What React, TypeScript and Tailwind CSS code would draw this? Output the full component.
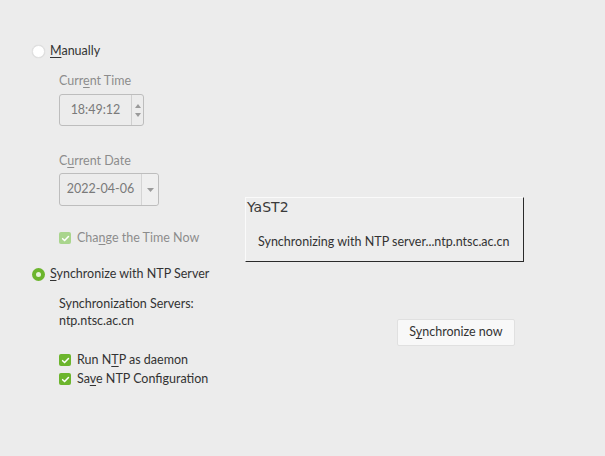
import React from "react";

function U({ children }: { children: React.ReactNode }) {
  return <span className="underline underline-offset-2 decoration-1">{children}</span>;
}

function Radio({ checked }: { checked?: boolean }) {
  if (checked) {
    return (
      <span className="w-[13px] h-[13px] rounded-full bg-[#6cb52d] flex items-center justify-center">
        <span className="w-[5px] h-[5px] rounded-full bg-[#e6f3d9]" />
      </span>
    );
  }
  return <span className="w-[13px] h-[13px] rounded-full bg-white border border-[#e2e2e2] shadow-[0_0_1px_rgba(0,0,0,0.15)]" />;
}

function Check({ disabled }: { disabled?: boolean }) {
  return (
    <span
      className={`w-[12px] h-[12px] rounded-[2px] flex items-center justify-center ${
        disabled ? "bg-[#a9d58d]" : "bg-[#6cb52d]"
      }`}
    >
      <svg width="9" height="9" viewBox="0 0 10 10">
        <path d="M1.8 5.2 L4 7.3 L8.3 2.8" fill="none" stroke="white" strokeWidth="1.7" strokeLinecap="round" strokeLinejoin="round" />
      </svg>
    </span>
  );
}

export default function App() {
  return (
    <div
      className="w-[605px] h-[456px] bg-[#ececec] relative overflow-hidden text-[12.5px] text-[#333]"
      style={{ fontFamily: "Lato, 'Noto Sans', sans-serif" }}
    >
      <div className="pl-[32px] pt-[43px] flex flex-col">
        <div className="flex items-center gap-[5px] h-[16px]">
          <Radio />
          <span>
            <U>M</U>anually
          </span>
        </div>

        <div className="pl-[27px] flex flex-col">
          <div className="mt-[14px] text-[#8c8c8c] leading-[16px]">
            Curr<U>e</U>nt Time
          </div>
          <div className="mt-[5px] w-[85px] h-[32px] border border-[#bdbdbd] rounded-[3px] flex text-[#7a7a7a]">
            <div className="flex-1 flex items-center justify-center">18:49:12</div>
            <div className="w-[12px] border-l border-[#cfcfcf] flex flex-col items-center justify-center gap-[5px]">
              <svg width="6" height="4" viewBox="0 0 6 4"><path d="M0 4 L3 0 L6 4Z" fill="#9a9a9a" /></svg>
              <svg width="6" height="4" viewBox="0 0 6 4"><path d="M0 0 L3 4 L6 0Z" fill="#9a9a9a" /></svg>
            </div>
          </div>

          <div className="mt-[27px] text-[#8c8c8c] leading-[16px]">
            C<U>u</U>rrent Date
          </div>
          <div className="mt-[4px] w-[100px] h-[33px] border border-[#bdbdbd] rounded-[3px] flex text-[#7a7a7a]">
            <div className="w-[81px] flex items-center justify-center">2022-04-06</div>
            <div className="flex-1 border-l border-[#d4d4d4] bg-[#efefef] rounded-r-[3px] flex items-center justify-center">
              <svg width="7" height="4" viewBox="0 0 7 4"><path d="M0 0 L3.5 4 L7 0Z" fill="#9a9a9a" /></svg>
            </div>
          </div>

          <div className="mt-[24px] flex items-center gap-[6px] h-[16px] text-[#8c8c8c]">
            <Check disabled />
            <span>
              Cha<U>n</U>ge the Time Now
            </span>
          </div>
        </div>

        <div className="mt-[20px] flex items-center gap-[5px] h-[16px]">
          <Radio checked />
          <span>
            <U>S</U>ynchronize with NTP Server
          </span>
        </div>

        <div className="pl-[27px] flex flex-col">
          <div className="flex items-end justify-between pr-[90px]">
            <div className="mt-[13px] leading-[17px]">
              <div>Synchronization Servers:</div>
              <div>ntp.ntsc.ac.cn</div>
            </div>
            <button className="w-[118px] h-[27px] bg-[#f8f8f8] border border-[#e0e0e0] rounded-[2px] text-[#333] -mb-[17px]">
              S<U>y</U>nchronize now
            </button>
          </div>

          <div className="mt-[23px] flex flex-col gap-[3px]">
            <div className="flex items-center gap-[6px] h-[16px]">
              <Check />
              <span>
                Run N<U>T</U>P as daemon
              </span>
            </div>
            <div className="flex items-center gap-[6px] h-[16px]">
              <Check />
              <span>
                Sa<U>v</U>e NTP Configuration
              </span>
            </div>
          </div>
        </div>
      </div>

      <div className="absolute left-[245px] top-[197px] w-[279px] h-[65px] bg-[#ededed] border-t border-l border-[#fafafa] border-r border-b border-r-[#2a2a2a] border-b-[#2a2a2a]">
        <div className="pl-[1px] text-[14px] text-[#3a3a3a] leading-[18px]" style={{ fontFamily: "'DejaVu Sans', sans-serif" }}>
          YaST2
        </div>
        <div className="pl-[12px] mt-[17px] text-[#333]">Synchronizing with NTP server...ntp.ntsc.ac.cn</div>
      </div>
    </div>
  );
}
